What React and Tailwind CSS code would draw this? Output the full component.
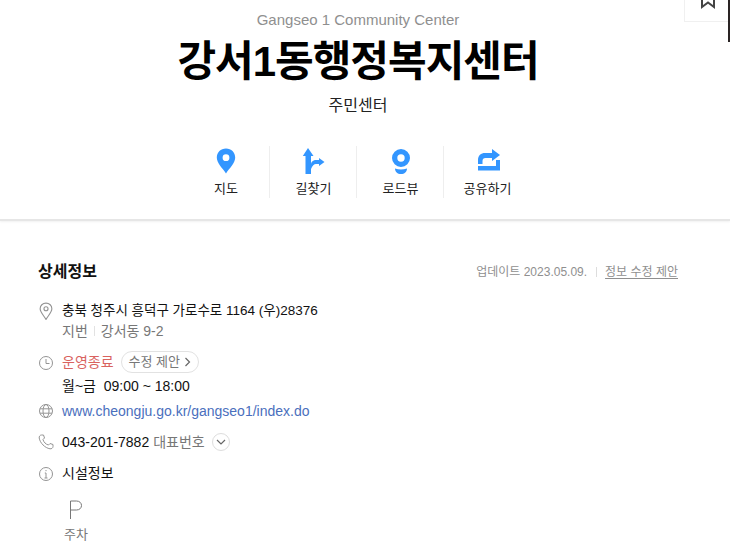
import React from "react";

const FONT = "font-['Liberation_Sans','Noto_Sans_CJK_KR',sans-serif]";

function ActionIcon({ label, children, divider }) {
  return (
    <div className={`flex h-[52px] w-[87px] flex-col items-center pl-[2px] ${divider ? "border-l border-[#eeeeee]" : ""}`}>
      <div className="flex h-[30px] items-center justify-center">{children}</div>
      <span className="mt-[5px] text-[13px] leading-4 text-[#222222]">{label}</span>
    </div>
  );
}

function MapPinIcon() {
  return (
    <svg width="20" height="26" viewBox="0 0 20 26" fill="none">
      <path
        fillRule="evenodd"
        d="M10 0.500C4.700 0.500 0.800 4.400 0.800 9.600C0.800 15 6.200 20 10 25.500C13.800 20 19.200 15 19.200 9.600C19.200 4.400 15.300 0.500 10 0.500ZM10 6.300A3.400 3.400 0 1 1 10 13.100A3.400 3.400 0 1 1 10 6.300Z"
        fill="#3396ff"
      />
    </svg>
  );
}

function RouteIcon() {
  return (
    <svg width="24" height="26" viewBox="0 0 24 26" fill="#3396ff">
      <path d="M6 0L11.500 8H9V26H3.500V8H0.800Z" />
      <path d="M9 21V16.500C9 13.500 11.500 12 14 12H17V10L22.500 14L17 18V16H14C12 16 10.500 17.500 9 21Z" />
    </svg>
  );
}

function RoadviewIcon() {
  return (
    <svg width="20" height="26" viewBox="0 0 20 26" fill="#3396ff">
      <path
        fillRule="evenodd"
        d="M10 1A9 9 0 1 1 10 19A9 9 0 1 1 10 1ZM10 6.300A3.700 3.700 0 1 0 10 13.700A3.700 3.700 0 1 0 10 6.300Z"
      />
      <path d="M4 20.500Q10 22.500 16 20.500C16 24 13.500 26 10 26C6.500 26 4 24 4 20.500Z" />
    </svg>
  );
}

function ShareIcon() {
  return (
    <svg width="24" height="24" viewBox="0 0 24 24" fill="#3396ff">
      <path d="M2 15V11C2 6.500 5 4 9 4H16V0L24 6L16 12V9H9.500C7.500 9 6.500 10 6.500 12V15Z" />
      <path d="M2 17H20V11H24V21.500H2Z" />
    </svg>
  );
}

function RowIcon({ children, size = 16 }) {
  return (
    <svg width={size} height={size} viewBox="0 0 16 16" fill="none" stroke="#949494" strokeWidth="1" className="shrink-0">
      {children}
    </svg>
  );
}

export default function App() {
  return (
    <div className={`relative h-[545px] w-[730px] overflow-hidden bg-white ${FONT}`}>
      {/* Bookmark button and page edge */}
      <div className="absolute right-0 top-0 flex h-[22px] w-[46px] items-end justify-center border-b border-l border-[#f0f0f0] pb-[12px]">
        <svg width="16" height="16" viewBox="0 0 16 16" fill="none" stroke="#444444" strokeWidth="2">
          <path d="M2 -6V14L8 9.500L14 14V-6" />
        </svg>
      </div>
      <div className="absolute right-0 top-0 h-[42px] w-[2px] bg-[#2a2424]" />

      {/* Title card */}
      <header className="flex h-[221px] flex-col items-center border-b-2 border-[#e6e6e6] pr-[14px] pt-[11px] shadow-[0_1px_2px_rgba(0,0,0,0.06)]">
        <p className="text-[15px] leading-[18px] text-[#8f8f8f]">Gangseo 1 Community Center</p>
        <h1 className="mt-[5px] text-[42px] font-bold leading-[56px] tracking-[-1px] text-black">강서1동행정복지센터</h1>
        <p className="mt-[4px] text-base leading-[24px] text-[#222222]">주민센터</p>
        <div className="mt-[28px] flex pr-[5px]">
          <ActionIcon label="지도"><MapPinIcon /></ActionIcon>
          <ActionIcon label="길찾기" divider><RouteIcon /></ActionIcon>
          <ActionIcon label="로드뷰" divider><RoadviewIcon /></ActionIcon>
          <ActionIcon label="공유하기" divider><ShareIcon /></ActionIcon>
        </div>
      </header>

      {/* Detail section */}
      <section className="px-[38px] pt-[39px]">
        <div className="flex items-center justify-between pr-[14px]">
          <h2 className="text-base font-bold leading-6 text-[#111111]">상세정보</h2>
          <div className="flex items-center text-xs text-[#8f8f8f]">
            <span>업데이트 2023.05.09.</span>
            <span className="ml-[9px] mr-[8px] h-[10px] w-px bg-[#dddddd]" />
            <a className="underline underline-offset-2">정보 수정 제안</a>
          </div>
        </div>

        <div className="mt-[17px] flex flex-col text-sm">
          <div className="flex gap-[7px]">
            <div className="-ml-px pt-px">
              <RowIcon size={18}>
                <path d="M8 1C5 1 2.800 3.200 2.800 6C2.800 9 6 12 8 15.500C10 12 13.200 9 13.200 6C13.200 3.200 11 1 8 1Z" />
                <circle cx="8" cy="6" r="1.800" />
              </RowIcon>
            </div>
            <div>
              <p className="text-[13.5px] leading-[20px] text-[#111111]">충북 청주시 흥덕구 가로수로 1164 (우)28376</p>
              <p className="flex items-center text-sm leading-[20px] text-[#777777]">
                지번<span className="mx-[6px] h-[10px] w-px bg-[#e2e2e2]" />강서동 9-2
              </p>
            </div>
          </div>

          <div className="mt-[10px] flex gap-[8px]">
            <div className="pt-[4px]">
              <RowIcon>
                <circle cx="8" cy="8" r="6.500" />
                <path d="M8 4V8.500H11.500" />
              </RowIcon>
            </div>
            <div>
              <div className="flex h-[22px] items-center gap-[7px]">
                <span className="text-[#d9635f]">운영종료</span>
                <span className="flex h-[22px] items-center gap-1 rounded-full border border-[#e2e2e2] px-[7px] text-[13px] text-[#777777]">
                  수정 제안
                  <svg width="7" height="10" viewBox="0 0 7 10" fill="none" stroke="#666666" strokeWidth="1.200"><path d="M1.500 1L5.500 5L1.500 9" /></svg>
                </span>
              </div>
              <p className="mt-[3px] leading-[20px] text-[#111111]">월~금&nbsp; 09:00 ~ 18:00</p>
            </div>
          </div>

          <div className="mt-[5px] flex items-center gap-[8px]">
            <RowIcon>
              <circle cx="8" cy="8" r="6.500" />
              <ellipse cx="8" cy="8" rx="3" ry="6.500" />
              <path d="M2 5.800H14M2 10.200H14" />
            </RowIcon>
            <a className="leading-[20px] text-[#4a6fbd]">www.cheongju.go.kr/gangseo1/index.do</a>
          </div>

          <div className="mt-[11px] flex items-center gap-[8px]">
            <RowIcon>
              <path d="M3.500 1L5.500 1L6.500 4L5 5.500C5.500 8 8 10.500 10.500 11L12 9.500L15 10.500L15 12.500C15 14 13.500 15 12 14.800C7 14 2 9 1.200 4C1 2.500 2 1 3.500 1Z" />
            </RowIcon>
            <span className="leading-[20px] text-[#111111]">043-201-7882</span>
            <span className="-ml-[4px] leading-[20px] text-[#777777]">대표번호</span>
            <span className="-ml-px flex h-[18px] w-[18px] items-center justify-center rounded-full border border-[#dddddd]">
              <svg width="10" height="7" viewBox="0 0 10 7" fill="none" stroke="#666666" strokeWidth="1.200"><path d="M1 1L5 5L9 1" /></svg>
            </span>
          </div>

          <div className="mt-[11px] flex gap-[8px]">
            <div className="pt-[3px]">
              <RowIcon>
                <circle cx="8" cy="8" r="6.500" />
                <path d="M8 7V12M6.500 12H9.500M6.800 7H8M8 4V5.200" />
              </RowIcon>
            </div>
            <p className="leading-[20px] text-[#111111]">시설정보</p>
          </div>

          <div className="ml-[24px] mt-[16px] flex w-[28px] flex-col items-center">
            <svg width="16" height="22" viewBox="0 0 16 22" fill="none" stroke="#777777" strokeWidth="1">
              <path d="M2.500 20V2H8.500C11.500 2 13.500 4 13.500 6.500C13.500 9 11.500 11 8.500 11H2.500" />
            </svg>
            <span className="mt-[6px] text-[13px] leading-4 text-[#777777]">주차</span>
          </div>
        </div>
      </section>
    </div>
  );
}
